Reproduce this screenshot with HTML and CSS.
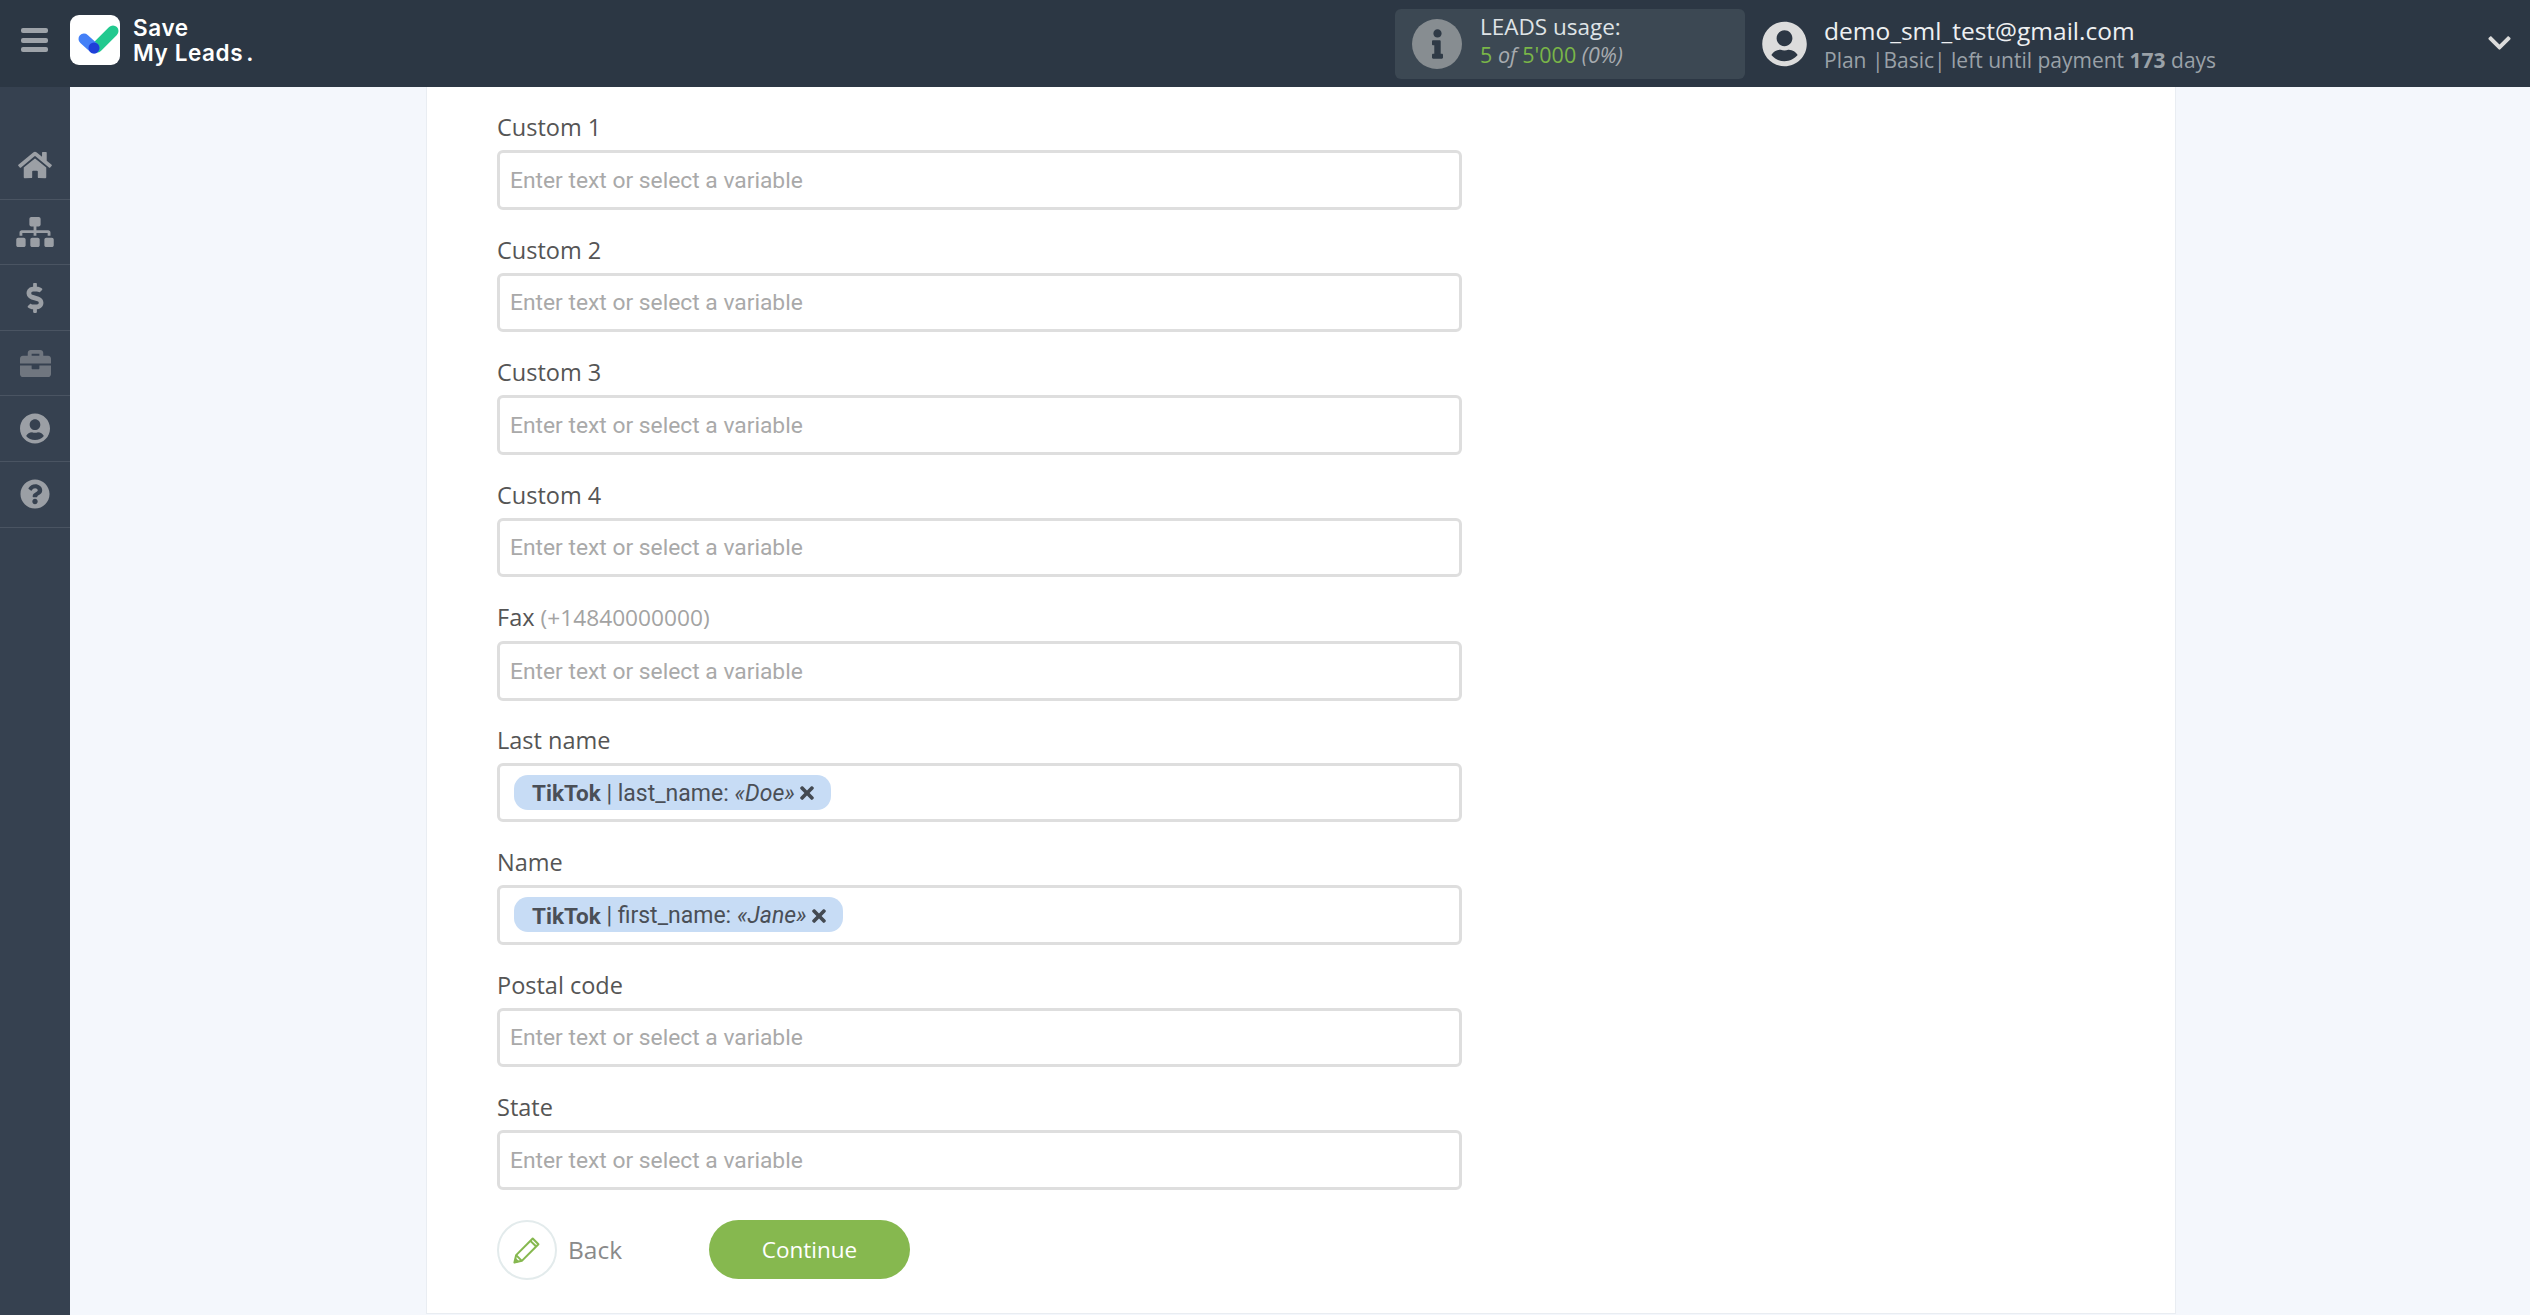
FILE: index.html
```html
<!DOCTYPE html>
<html lang="en">
<head>
<meta charset="utf-8">
<title>Save My Leads</title>
<link rel="stylesheet" href="styles.css">
</head>
<body>
<header class="topbar">
  <div class="burger"><i></i><i></i><i></i></div>
  <div class="logo-mark">
    <svg viewBox="0 0 50 50" width="50" height="50">
      <path d="M27 32 L43 16" stroke="#22c98f" stroke-width="11" stroke-linecap="round" fill="none"/>
      <path d="M14 24 L24 33" stroke="#4480f7" stroke-width="11" stroke-linecap="round" fill="none"/>
      <circle cx="24" cy="33" r="5.5" fill="#1f3fd8"/>
    </svg>
  </div>
  <div class="logo-text"><span>Save</span><span>My Leads<b>.</b></span></div>
  <div class="usage">
    <span class="usage-icon"><svg viewBox="0 0 192 512" width="11" height="30"><path fill="#2f3a46" d="M20 424.229h20V279.771H20c-11.046 0-20-8.954-20-20V212c0-11.046 8.954-20 20-20h112c11.046 0 20 8.954 20 20v212.229h20c11.046 0 20 8.954 20 20V492c0 11.046-8.954 20-20 20H20c-11.046 0-20-8.954-20-20v-47.771c0-11.046 8.954-20 20-20zM96 0C56.235 0 24 32.235 24 72s32.235 72 72 72 72-32.235 72-72S135.764 0 96 0z"/></svg></span>
    <div class="usage-text">
      <div class="usage-title">LEADS usage:</div>
      <div class="usage-count"><span class="green">5</span> <em>of</em> <span class="green">5'000</span> <em>(0%)</em></div>
    </div>
  </div>
  <div class="account">
    <svg class="avatar" viewBox="0 0 496 512" width="45" height="46"><path fill="#dcdcdc" d="M248 8C111 8 0 119 0 256s111 248 248 248 248-111 248-248S385 8 248 8zm0 96c48.6 0 88 39.4 88 88s-39.4 88-88 88-88-39.4-88-88 39.4-88 88-88zm0 344c-58.7 0-111.3-26.6-146.5-68.2 18.8-35.4 55.6-59.8 98.5-59.8 2.4 0 4.8.4 7.1 1.1 13 4.2 26.6 6.9 40.9 6.9 14.3 0 28-2.7 40.9-6.9 2.3-.7 4.7-1.1 7.1-1.1 42.9 0 79.7 24.4 98.5 59.8C359.3 421.4 306.7 448 248 448z"/></svg>
    <div class="account-text">
      <div class="email">demo_sml_test@gmail.com</div>
      <div class="plan">Plan |Basic| left until payment <b>173</b> days</div>
    </div>
  </div>
  <svg class="chevron" viewBox="0 0 448 512" width="23" height="26"><path fill="#dcdcdc" d="M207.029 381.476L12.686 187.132c-9.373-9.373-9.373-24.569 0-33.941l22.667-22.667c9.357-9.357 24.522-9.375 33.901-.04L224 284.505l154.745-154.021c9.379-9.335 24.544-9.317 33.901.04l22.667 22.667c9.373 9.373 9.373 24.569 0 33.941L240.971 381.476c-9.373 9.372-24.569 9.372-33.942 0z"/></svg>
</header>
<div class="layout">
  <nav class="sidebar">
    <a class="nav-item nav-first"><svg viewBox="0 0 576 512" width="34" height="30"><path d="M280.37 148.26L96 300.11V464a16 16 0 0 0 16 16l112.06-.29a16 16 0 0 0 15.92-16V368a16 16 0 0 1 16-16h64a16 16 0 0 1 16 16v95.64a16 16 0 0 0 16 16.05L464 480a16 16 0 0 0 16-16V300L295.67 148.26a12.19 12.19 0 0 0-15.3 0zM571.6 251.47L488 182.56V44.05a12 12 0 0 0-12-12h-56a12 12 0 0 0-12 12v72.61L318.47 43a48 48 0 0 0-61 0L4.34 251.47a12 12 0 0 0-1.6 16.9l25.5 31A12 12 0 0 0 45.15 301l235.22-193.74a12.19 12.19 0 0 1 15.3 0L530.9 301a12 12 0 0 0 16.9-1.6l25.5-31a12 12 0 0 0-1.7-16.93z"/></svg></a>
    <a class="nav-item"><svg viewBox="0 0 640 512" width="38" height="30"><path d="M128 352H32c-17.67 0-32 14.33-32 32v96c0 17.67 14.33 32 32 32h96c17.67 0 32-14.33 32-32v-96c0-17.67-14.33-32-32-32zm-24-80h192v48h48v-48h192v48h48v-57.59c0-21.17-17.23-38.41-38.41-38.41H344v-64h40c17.67 0 32-14.33 32-32V32c0-17.67-14.33-32-32-32H256c-17.67 0-32 14.33-32 32v96c0 17.67 14.33 32 32 32h40v64H94.41C73.23 224 56 241.23 56 262.41V320h48v-48zm264 80h-96c-17.67 0-32 14.33-32 32v96c0 17.67 14.33 32 32 32h96c17.67 0 32-14.33 32-32v-96c0-17.67-14.33-32-32-32zm240 0h-96c-17.67 0-32 14.33-32 32v96c0 17.67 14.33 32 32 32h96c17.67 0 32-14.33 32-32v-96c0-17.67-14.33-32-32-32z"/></svg></a>
    <a class="nav-item"><svg viewBox="0 0 288 512" width="18" height="30"><path d="M209.2 233.4l-108-31.6C88.7 198.2 80 186.5 80 173.5c0-16.3 13.2-29.5 29.5-29.5h66.3c12.2 0 24.2 3.7 34.2 10.5 6.1 4.1 14.3 3.1 19.5-2l34.8-34c7.1-6.9 6.1-18.4-1.8-24.5C238 74.8 207.4 64.1 176 64V16c0-8.8-7.2-16-16-16h-32c-8.8 0-16 7.2-16 16v48h-2.5C45.8 64-5.4 118.7.5 183.6c4.2 46.1 39.4 83.6 83.8 96.6l102.5 30c12.5 3.7 21.2 15.3 21.2 28.3 0 16.3-13.2 29.5-29.5 29.5h-66.3C100 368 88 364.3 78 357.5c-6.1-4.1-14.3-3.1-19.5 2l-34.8 34c-7.1 6.9-6.1 18.4 1.8 24.5 24.5 19.2 55.1 29.9 86.5 30v48c0 8.8 7.2 16 16 16h32c8.8 0 16-7.2 16-16v-48.2c46.6-.9 90.3-28.6 105.7-72.7 21.5-61.6-14.6-124.8-72.5-141.7z"/></svg></a>
    <a class="nav-item nav-dim"><svg viewBox="0 0 512 512" width="31" height="31"><path d="M320 336c0 8.84-7.16 16-16 16h-96c-8.84 0-16-7.16-16-16v-48H0v144c0 25.6 22.4 48 48 48h416c25.6 0 48-22.4 48-48V288H320v48zm144-208h-80V80c0-25.6-22.4-48-48-48H176c-25.6 0-48 22.4-48 48v48H48c-25.6 0-48 22.4-48 48v80h512v-80c0-25.6-22.4-48-48-48zm-144 0H192V96h128v32z"/></svg></a>
    <a class="nav-item"><svg viewBox="0 0 496 512" width="30" height="31"><path d="M248 8C111 8 0 119 0 256s111 248 248 248 248-111 248-248S385 8 248 8zm0 96c48.6 0 88 39.4 88 88s-39.4 88-88 88-88-39.4-88-88 39.4-88 88-88zm0 344c-58.7 0-111.3-26.6-146.5-68.2 18.8-35.4 55.6-59.8 98.5-59.8 2.4 0 4.8.4 7.1 1.1 13 4.2 26.6 6.9 40.9 6.9 14.3 0 28-2.7 40.9-6.9 2.3-.7 4.7-1.1 7.1-1.1 42.9 0 79.7 24.4 98.5 59.8C359.3 421.4 306.7 448 248 448z"/></svg></a>
    <a class="nav-item"><svg viewBox="0 0 512 512" width="30" height="30"><path d="M504 256c0 136.997-111.043 248-248 248S8 392.997 8 256C8 119.083 119.043 8 256 8s248 111.083 248 248zM262.655 90c-54.497 0-89.255 22.957-116.549 63.758-3.536 5.286-2.353 12.415 2.715 16.258l34.699 26.31c5.205 3.947 12.621 3.008 16.665-2.122 17.864-22.658 30.113-35.797 57.303-35.797 20.429 0 45.698 13.148 45.698 32.958 0 14.976-12.363 22.667-32.534 33.976C247.128 238.528 216 254.941 216 296v4c0 6.627 5.373 12 12 12h56c6.627 0 12-5.373 12-12v-1.333c0-28.462 83.186-29.647 83.186-106.667 0-58.002-60.165-102-116.531-102zM256 338c-25.365 0-46 20.635-46 46 0 25.364 20.635 46 46 46s46-20.636 46-46c0-25.365-20.635-46-46-46z"/></svg></a>
  </nav>
  <main class="main">
    <section class="card">
      <div class="field"><div class="label">Custom 1</div><div class="input"><span class="ph">Enter text or select a variable</span></div></div>
      <div class="field"><div class="label">Custom 2</div><div class="input"><span class="ph">Enter text or select a variable</span></div></div>
      <div class="field"><div class="label">Custom 3</div><div class="input"><span class="ph">Enter text or select a variable</span></div></div>
      <div class="field"><div class="label">Custom 4</div><div class="input"><span class="ph">Enter text or select a variable</span></div></div>
      <div class="field"><div class="label">Fax <span class="hint">(+14840000000)</span></div><div class="input"><span class="ph">Enter text or select a variable</span></div></div>
      <div class="field"><div class="label">Last name</div><div class="input"><span class="chip"><b>TikTok</b> | last_name: <em>«Doe»</em><svg class="chip-x" viewBox="0 0 352 512" width="14" height="20"><path d="M242.72 256l100.07-100.07c12.28-12.28 12.28-32.19 0-44.48l-22.24-22.24c-12.28-12.28-32.19-12.28-44.48 0L176 189.28 75.93 89.21c-12.28-12.28-32.19-12.28-44.48 0L9.21 111.45c-12.28 12.28-12.28 32.19 0 44.48L109.28 256 9.21 356.07c-12.28 12.28-12.28 32.19 0 44.48l22.24 22.24c12.28 12.28 32.2 12.28 44.48 0L176 322.72l100.07 100.07c12.28 12.28 32.2 12.28 44.48 0l22.24-22.24c12.28-12.28 12.28-32.19 0-44.48L242.72 256z"/></svg></span></div></div>
      <div class="field"><div class="label">Name</div><div class="input"><span class="chip"><b>TikTok</b> | first_name: <em>«Jane»</em><svg class="chip-x" viewBox="0 0 352 512" width="14" height="20"><path d="M242.72 256l100.07-100.07c12.28-12.28 12.28-32.19 0-44.48l-22.24-22.24c-12.28-12.28-32.19-12.28-44.48 0L176 189.28 75.93 89.21c-12.28-12.28-32.19-12.28-44.48 0L9.21 111.45c-12.28 12.28-12.28 32.19 0 44.48L109.28 256 9.21 356.07c-12.28 12.28-12.28 32.19 0 44.48l22.24 22.24c12.28 12.28 32.2 12.28 44.48 0L176 322.72l100.07 100.07c12.28 12.28 32.2 12.28 44.48 0l22.24-22.24c12.28-12.28 12.28-32.19 0-44.48L242.72 256z"/></svg></span></div></div>
      <div class="field"><div class="label">Postal code</div><div class="input"><span class="ph">Enter text or select a variable</span></div></div>
      <div class="field"><div class="label">State</div><div class="input"><span class="ph">Enter text or select a variable</span></div></div>
      <div class="actions">
        <span class="back-circle"><svg viewBox="0 0 28 28" width="32" height="32"><g fill="none" stroke="#86b84f" stroke-width="1.8" stroke-linejoin="round"><path d="M3 25 L4.5 18.5 L19 4 L24 9 L9.5 23.5 Z"/><path d="M4.5 18.5 L9.5 23.5"/><path d="M17 6 L22 11"/></g><path d="M2.5 25.5 L3.8 20.5 L7.5 24.2 Z" fill="#86b84f"/></svg></span>
        <span class="back-text">Back</span>
        <span class="continue">Continue</span>
      </div>
    </section>
  </main>
</div>
</body>
</html>
```

FILE: styles.css
```css
* { box-sizing: border-box; }
html, body { margin: 0; padding: 0; height: 100%; overflow: hidden; }
body { background: #f4f7fc; font-family: "Open Sans", sans-serif; color: #555; }

.topbar {
  height: 87px;
  background: #2c3744;
  display: flex;
  align-items: center;
  position: relative;
}
.burger { width: 70px; display: flex; flex-direction: column; align-items: center; gap: 4.5px; margin-top: -7px; padding-right: 1px; }
.burger i { display: block; width: 27px; height: 5px; border-radius: 2px; background: #9ea3a9; }
.logo-mark { width: 50px; height: 50px; background: #fff; border-radius: 9px; margin-top: -7px; }
.logo-mark svg { display: block; }
.logo-text {
  margin-left: 13px;
  margin-top: -8px;
  display: flex;
  flex-direction: column;
  font-family: "Inter", sans-serif;
  font-weight: 600;
  font-size: 22.5px;
  line-height: 25px;
  color: #fff;
  letter-spacing: 0.6px;
}
.logo-text b { margin-left: 3px; font-weight: 600; }
.usage {
  margin-left: auto;
  width: 350px;
  height: 70px;
  background: #3c4853;
  border-radius: 6px;
  display: flex;
  align-items: center;
  padding-left: 17px;
}
.usage-icon {
  width: 50px; height: 50px; border-radius: 50%;
  background: #878d91;
  display: flex; align-items: center; justify-content: center;
  flex: none;
}
.usage-text { margin-left: 18px; padding-bottom: 8px; }
.usage-title { font-size: 22.5px; line-height: 30px; color: #dfe3e6; }
.usage-count { font-size: 21.5px; line-height: 26px; color: #a7abaf; }
.usage-count em { font-style: italic; }
.green { color: #7ab648; }
.account { display: flex; align-items: center; margin-left: 17px; width: 768px; }
.avatar { flex: none; }
.account-text { margin-left: 17px; padding-top: 2px; }
.email { font-size: 24.5px; line-height: 30px; color: #eef0f2; }
.plan { font-size: 21px; line-height: 28px; color: #9aa1a8; }
.plan b { font-weight: 700; }
.chevron { position: absolute; right: 19px; top: 30px; }

.layout { display: flex; height: 1228px; }
.sidebar { width: 70px; flex: none; background: #364150; padding-top: 45px; display: flex; flex-direction: column; }
.nav-item { height: 65.6px; display: flex; align-items: center; justify-content: center; border-bottom: 1px solid #4a5462; fill: #9b9fa5; }
.nav-first { height: 67.7px; }
.nav-dim { fill: #70767f; }

.main { flex: 1; padding-left: 356px; }
.card {
  width: 1750px;
  height: 1227px;
  background: #fff;
  border: 1px solid #e9edf2;
  border-top: 0;
  padding: 25px 0 0 70px;
}
.field { width: 965px; height: 122.5px; }
.label { font-size: 23.5px; line-height: 30px; color: #555; margin-bottom: 8px; }
.hint { color: #a3a3a3; font-size: 22.7px; }
.input {
  height: 59.5px;
  border: 3px solid #dedede;
  border-radius: 6px;
  padding-left: 10px;
  display: flex;
  align-items: center;
  background: #fff;
}
.ph { font-family: "Roboto", sans-serif; font-size: 22.8px; color: #a9a9a9; padding-top: 1px; }
.chip {
  display: inline-flex;
  align-items: center;
  height: 35px;
  margin-left: 4px;
  padding: 2px 17px 0 18px;
  background: #c7dcf5;
  border-radius: 14px;
  font-family: "Roboto", sans-serif;
  font-size: 23px;
  color: #4a4f57;
  white-space: pre;
}
.chip b { font-weight: 700; font-size: 22.5px; }
.chip em { font-style: italic; }
.chip-x { margin-left: 5px; fill: #444a52; }

.actions { display: flex; align-items: center; margin-top: 5px; }
.back-circle {
  width: 60px; height: 60px; border-radius: 50%;
  border: 2px solid #e3ebec;
  display: flex; align-items: center; justify-content: center;
}
.back-text { margin-left: 11px; font-size: 24.5px; color: #8a8a8a; width: 141px; }
.continue {
  width: 201px; height: 59px; border-radius: 30px;
  background: #86b84f; color: #fff;
  font-size: 22.5px;
  display: flex; align-items: center; justify-content: center;
}
```
